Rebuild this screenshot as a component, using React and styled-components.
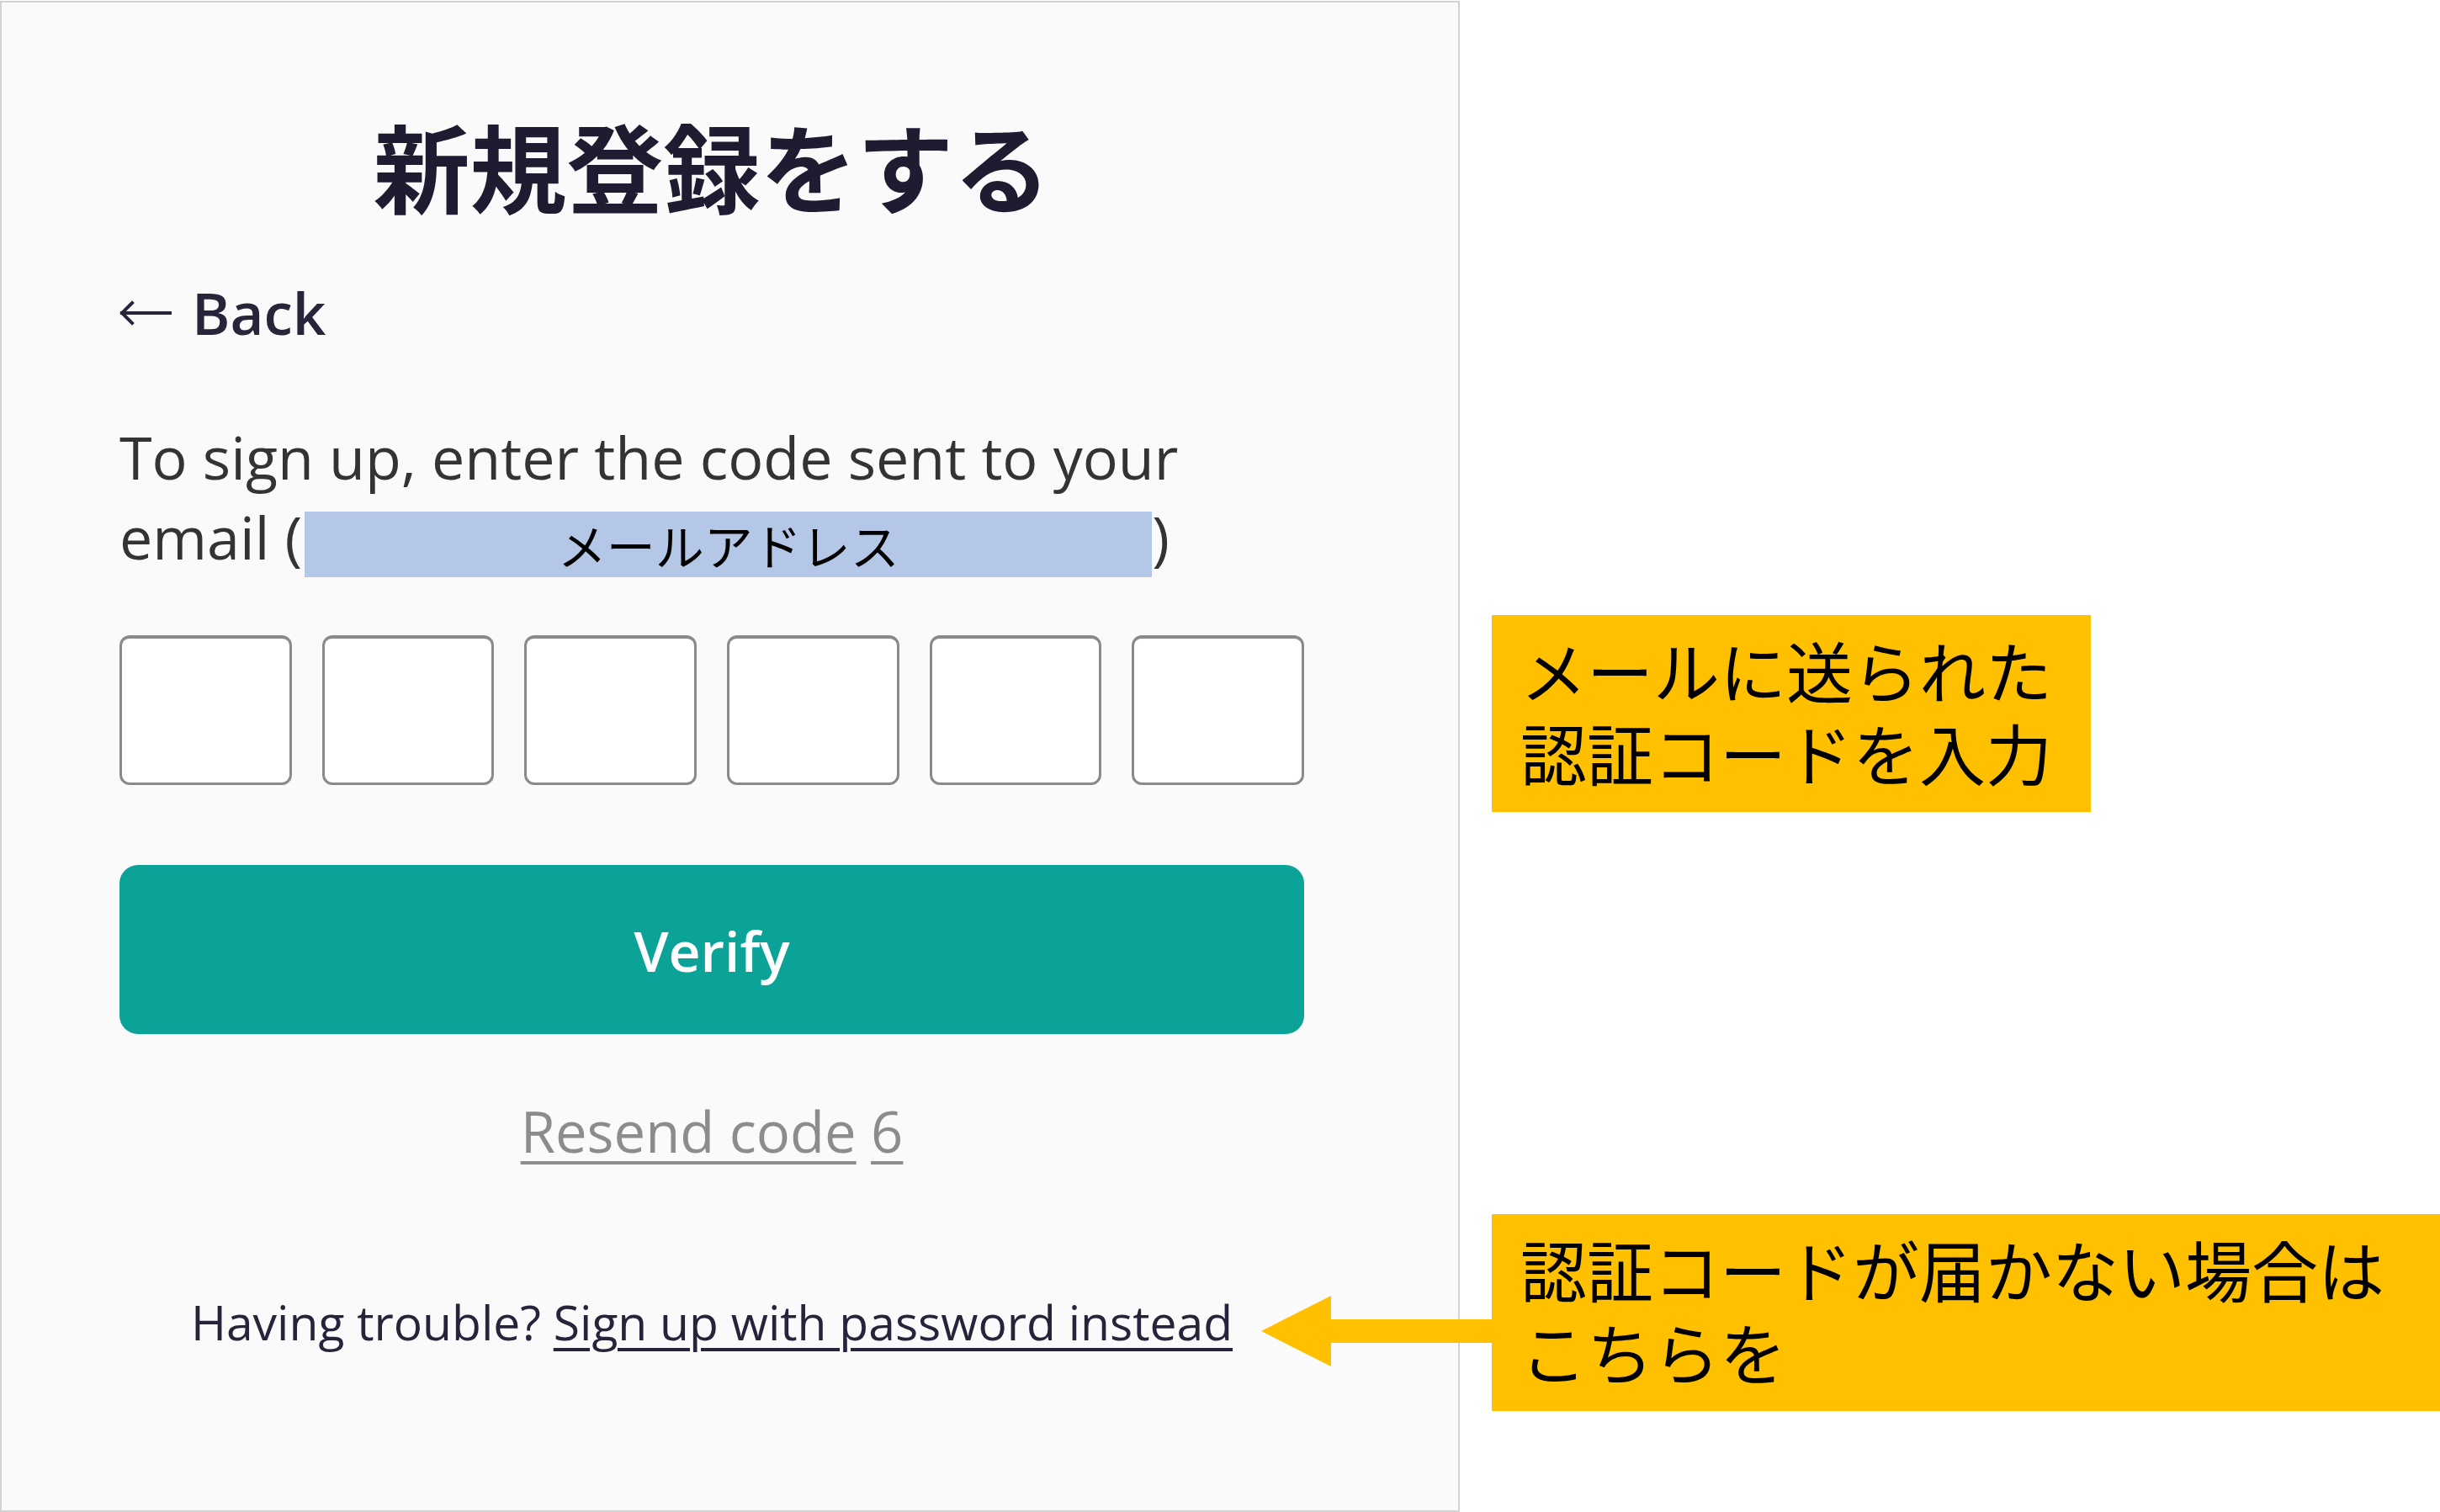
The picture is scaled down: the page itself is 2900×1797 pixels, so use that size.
import React from "react";
import styled, { createGlobalStyle } from "styled-components";

const GlobalStyle = createGlobalStyle`
  html, body {
    margin: 0;
    padding: 0;
    background: #ffffff;
  }
  body {
    font-family: "Open Sans", "Noto Sans CJK JP", sans-serif;
  }
`;

const Page = styled.div`
  display: flex;
  width: 2900px;
  height: 1797px;
  overflow: hidden;
`;

const Card = styled.div`
  box-sizing: border-box;
  width: 1735px;
  height: 1796px;
  margin-top: 1px;
  flex-shrink: 0;
  border: 2px solid #d3d3d3;
  background: #fafafa;
  padding: 123px 0 0 140px;
  display: flex;
  flex-direction: column;
`;

const Content = styled.div`
  width: 1408px;
  display: flex;
  flex-direction: column;
`;

const Title = styled.h1`
  margin: 0;
  text-align: center;
  font-family: "Noto Sans CJK JP", sans-serif;
  font-weight: 700;
  font-size: 115px;
  line-height: 138px;
  color: #1d1c30;
`;

const BackLink = styled.a`
  margin-top: 62px;
  display: flex;
  align-items: center;
  gap: 24px;
  font-size: 69px;
  line-height: 91px;
  font-weight: 600;
  color: #26253a;
  text-decoration: none;
`;

const Message = styled.p`
  margin: 79px 0 0;
  max-width: 1300px;
  font-size: 70px;
  line-height: 95px;
  color: #333333;
`;

const Masked = styled.span`
  display: inline-flex;
  align-items: center;
  justify-content: center;
  width: 1007px;
  height: 78px;
  margin-left: 3px;
  vertical-align: bottom;
  background: #b4c7e7;
  font-family: "Noto Sans CJK JP", sans-serif;
  font-size: 58px;
  color: #000000;
`;

const CodeRow = styled.div`
  margin-top: 69px;
  display: grid;
  grid-template-columns: repeat(6, 1fr);
  gap: 36px;
`;

const CodeBox = styled.div`
  box-sizing: border-box;
  height: 178px;
  background: #ffffff;
  border: 3px solid #8a8a8a;
  border-top-width: 4px;
  border-radius: 12px;
`;

const VerifyButton = styled.button`
  margin-top: 95px;
  height: 201px;
  border: none;
  border-radius: 22px;
  background: #0ba398;
  color: #ffffff;
  font-family: "Open Sans", sans-serif;
  font-size: 66px;
  font-weight: 600;
`;

const Resend = styled.div`
  margin-top: 71px;
  text-align: center;
  font-size: 67px;
  line-height: 88px;
  color: #8c8c8c;
`;

const Underlined = styled.span`
  text-decoration: underline;
  text-decoration-thickness: 4px;
  text-underline-offset: 10px;
`;

const Trouble = styled.div`
  margin-top: 145px;
  text-align: center;
  font-size: 57px;
  line-height: 76px;
  color: #25243a;
`;

const TroubleLink = styled.a`
  color: #25243a;
  text-decoration: underline;
  text-decoration-thickness: 4px;
  text-underline-offset: 9px;
`;

const Notes = styled.div`
  flex: 1;
  display: flex;
  flex-direction: column;
  align-items: flex-start;
  padding: 731px 0 0 38px;
`;

const Callout = styled.div`
  position: relative;
  box-sizing: border-box;
  align-self: ${props => (props.$wide ? "stretch" : "flex-start")};
  width: ${props => (props.$wide ? "auto" : "712px")};
  height: 234px;
  margin-top: ${props => props.$gap || 0}px;
  padding: 16px 34px 0;
  background: #ffc000;
  font-family: "Noto Sans CJK JP", sans-serif;
  font-size: 79px;
  line-height: 98px;
  color: #000000;
`;

const Pointer = styled.svg`
  position: absolute;
  right: 100%;
  top: 97px;
`;

const BackArrow = () => (
  <svg width="62" height="30" viewBox="0 0 62 30">
    <path
      d="M60 15 H3 M15 3 L3 15 L15 27"
      fill="none"
      stroke="#26253a"
      strokeWidth="4"
      strokeLinecap="square"
    />
  </svg>
);

export default function App() {
  return (
    <>
      <GlobalStyle />
      <Page>
        <Card>
          <Content>
            <Title>新規登録をする</Title>
            <BackLink href="#">
              <BackArrow />
              Back
            </BackLink>
            <Message>
              To sign up, enter the code sent to your email (
              <Masked>メールアドレス</Masked>)
            </Message>
            <CodeRow>
              {[0, 1, 2, 3, 4, 5].map(i => (
                <CodeBox key={i} />
              ))}
            </CodeRow>
            <VerifyButton>Verify</VerifyButton>
            <Resend>
              <Underlined>Resend code</Underlined> <Underlined>6</Underlined>
            </Resend>
            <Trouble>
              Having trouble? <TroubleLink href="#">Sign up with password instead</TroubleLink>
            </Trouble>
          </Content>
        </Card>
        <Notes>
          <Callout>
            メールに送られた
            <br />
            認証コードを入力
          </Callout>
          <Callout $wide $gap={478}>
            <Pointer width="274" height="84" viewBox="0 0 274 84">
              <polygon points="0,42 83,0 83,28 274,28 274,56 83,56 83,84" fill="#ffc000" />
            </Pointer>
            認証コードが届かない場合は
            <br />
            こちらを
          </Callout>
        </Notes>
      </Page>
    </>
  );
}
